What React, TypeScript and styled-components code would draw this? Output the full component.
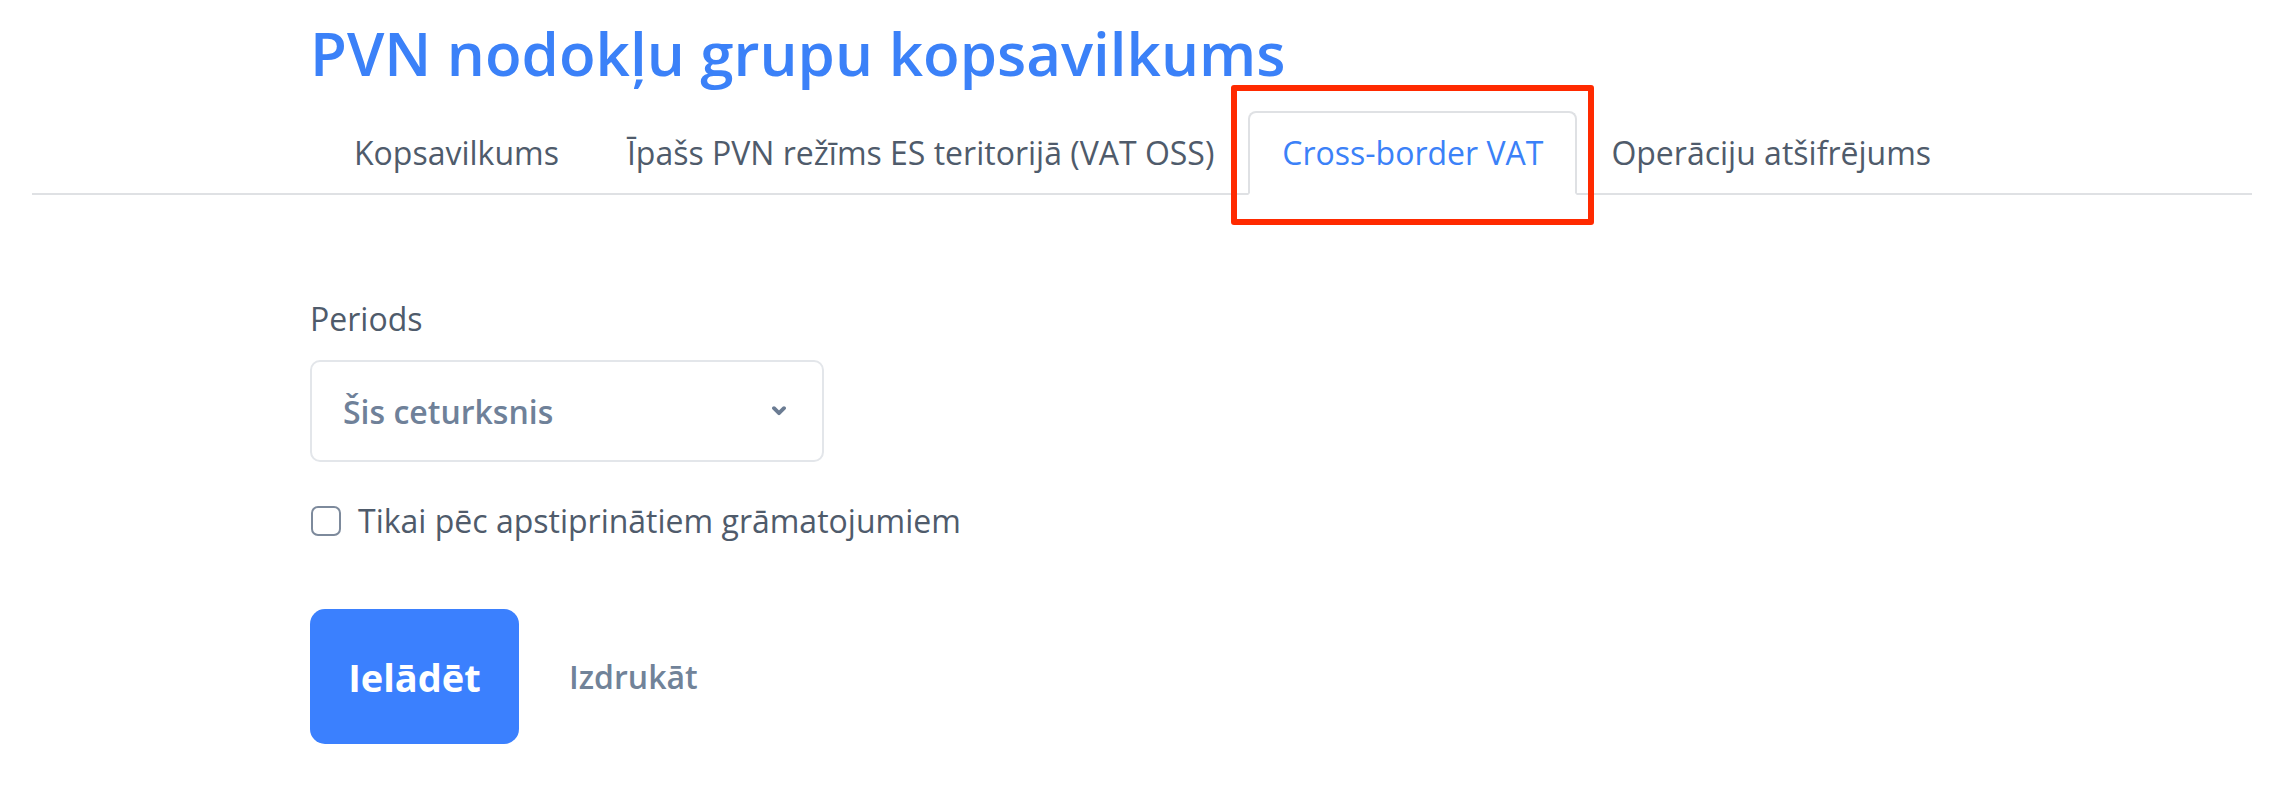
import React, { FunctionComponent, useState } from "react";
import styled, { createGlobalStyle } from "styled-components";

const GlobalStyle = createGlobalStyle`
  html, body {
    margin: 0;
    padding: 0;
    background: #fff;
  }
  body {
    font-family: "Open Sans", "Noto Sans", Arial, sans-serif;
    color: #4a5568;
  }
`;

const Page = styled.div`
  padding: 0 40px 0 32px;
`;

const Header = styled.div`
  padding: 17px 0 0 278px;
`;

const Title = styled.h1`
  margin: 0;
  font-size: 60px;
  line-height: 72px;
  font-weight: 600;
  color: #3b81f8;
`;

const TabNav = styled.ul`
  display: flex;
  list-style: none;
  margin: 22px 0 0;
  padding: 0 0 0 288px;
  border-bottom: 2px solid #dfe1e4;
`;

const Tab = styled.li<{ $active?: boolean }>`
  position: relative;
  margin-bottom: -2px;
  padding: 16px 32px;
  font-size: 32px;
  line-height: 48px;
  white-space: nowrap;
  border: 2px solid ${(p) => (p.$active ? "#dfe1e4" : "transparent")};
  border-bottom-color: ${(p) => (p.$active ? "#fff" : "transparent")};
  border-radius: 8px 8px 0 0;
  color: ${(p) => (p.$active ? "#3b81f8" : "#4f5b6b")};
  background: ${(p) => (p.$active ? "#fff" : "transparent")};
  cursor: pointer;
`;

// annotation frame drawn over the active tab
const Highlight = styled.span`
  position: absolute;
  left: -19px;
  top: -28px;
  right: -19px;
  bottom: -32px;
  border: 6px solid #ff2a00;
  border-radius: 3px;
  pointer-events: none;
`;

const Form = styled.div`
  padding: 100px 0 40px 278px;
  display: flex;
  flex-direction: column;
  align-items: flex-start;
`;

const Label = styled.label`
  display: block;
  font-size: 32px;
  line-height: 48px;
  color: #4f5b6b;
  margin-bottom: 17px;
`;

const SelectBox = styled.div`
  box-sizing: border-box;
  width: 514px;
  height: 102px;
  border: 2px solid #e3e6ea;
  border-radius: 10px;
  padding: 0 36px 0 31px;
  display: flex;
  align-items: center;
  justify-content: space-between;
`;

const SelectValue = styled.span`
  font-size: 32px;
  line-height: 48px;
  font-weight: 600;
  color: #6f8199;
  margin-top: 2px;
`;

const CheckRow = styled.label`
  display: flex;
  align-items: center;
  gap: 17px;
  margin-top: 35px;
  font-size: 32px;
  line-height: 48px;
  color: #4f5b6b;
  cursor: pointer;
`;

const CheckBox = styled.span<{ $checked: boolean }>`
  box-sizing: border-box;
  width: 30px;
  height: 30px;
  margin-left: 1px;
  border: 2px solid #7d8a9c;
  border-radius: 7px;
  background: ${(p) => (p.$checked ? "#3b81f8" : "#fff")};
`;

const Actions = styled.div`
  display: flex;
  align-items: center;
  gap: 50px;
  margin-top: 64px;
`;

const PrimaryButton = styled.button`
  box-sizing: border-box;
  width: 209px;
  height: 135px;
  border: none;
  border-radius: 15px;
  background: #3b80fe;
  color: #fff;
  font-family: inherit;
  font-size: 38px;
  font-weight: 700;
  cursor: pointer;
`;

const LinkButton = styled.button`
  border: none;
  background: none;
  padding: 0;
  font-family: inherit;
  font-size: 32px;
  line-height: 48px;
  font-weight: 600;
  color: #718399;
  cursor: pointer;
`;

const Chevron: FunctionComponent = () => (
  <svg width="14" height="10" viewBox="0 0 14 10">
    <polyline
      points="2,2.2 7,7.2 12,2.2"
      fill="none"
      stroke="#6b7c93"
      strokeWidth="3.8"
      strokeLinecap="round"
      strokeLinejoin="round"
    />
  </svg>
);

const tabs = [
  "Kopsavilkums",
  "Īpašs PVN režīms ES teritorijā (VAT OSS)",
  "Cross-border VAT",
  "Operāciju atšifrējums",
];

const App: FunctionComponent = () => {
  const [active, setActive] = useState(2);
  const [confirmedOnly, setConfirmedOnly] = useState(false);

  return (
    <>
      <GlobalStyle />
      <Page>
        <Header>
          <Title>PVN nodokļu grupu kopsavilkums</Title>
        </Header>
        <TabNav>
          {tabs.map((t, i) => (
            <Tab key={t} $active={i === active} onClick={() => setActive(i)}>
              {t}
              {i === 2 && <Highlight />}
            </Tab>
          ))}
        </TabNav>
        <Form>
          <Label>Periods</Label>
          <SelectBox>
            <SelectValue>Šis ceturksnis</SelectValue>
            <Chevron />
          </SelectBox>
          <CheckRow onClick={() => setConfirmedOnly(!confirmedOnly)}>
            <CheckBox $checked={confirmedOnly} />
            Tikai pēc apstiprinātiem grāmatojumiem
          </CheckRow>
          <Actions>
            <PrimaryButton>Ielādēt</PrimaryButton>
            <LinkButton>Izdrukāt</LinkButton>
          </Actions>
        </Form>
      </Page>
    </>
  );
};

export default App;
